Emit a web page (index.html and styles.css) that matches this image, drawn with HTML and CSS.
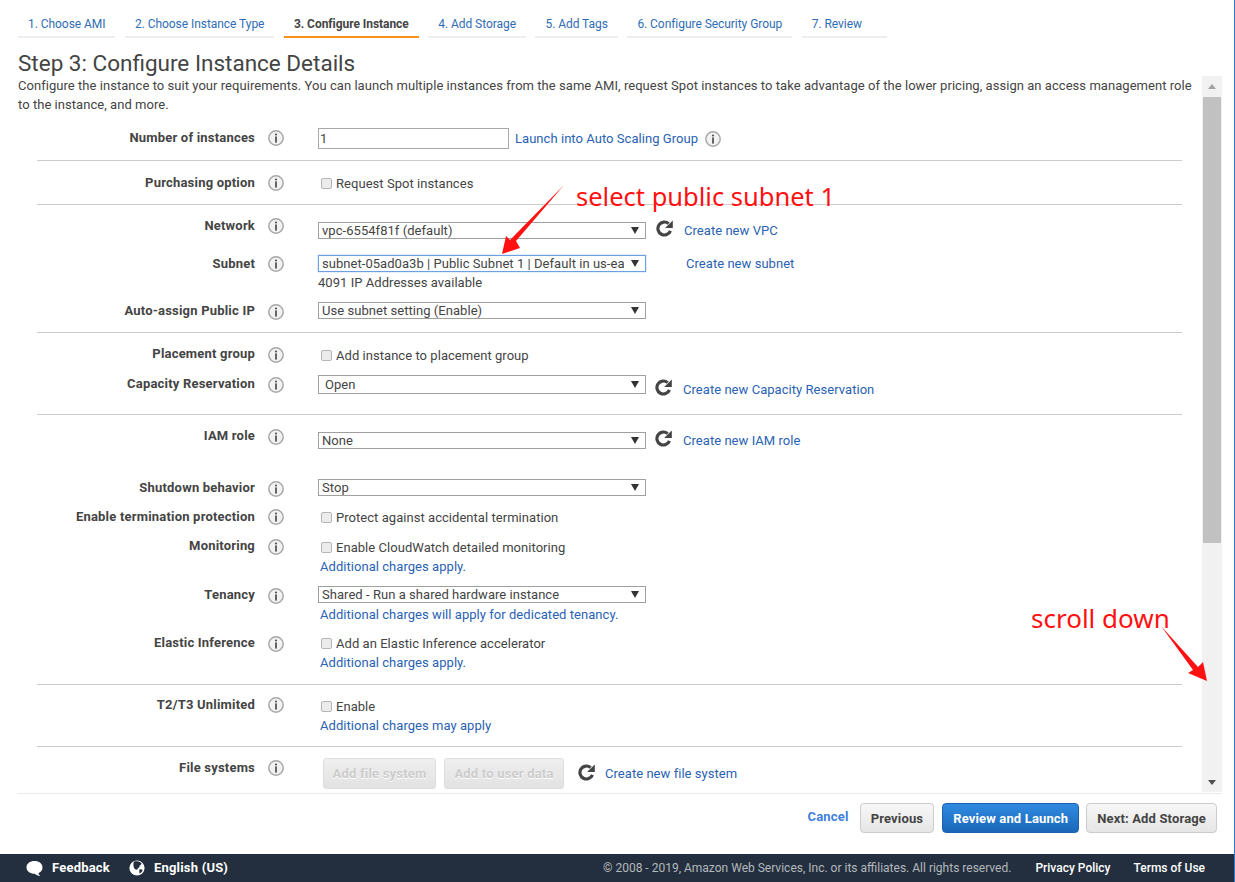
FILE: index.html
```html
<!DOCTYPE html>
<html lang="en">

<head>
  <meta charset="UTF-8">
  <title>Step 3: Configure Instance Details</title>
  <link rel="stylesheet" href="styles.css">
</head>

<body>
  <svg class="defs" width="0" height="0">
    <symbol id="info" viewBox="0 0 16 16">
      <circle cx="8" cy="8" r="7.2" fill="#f2f2f2" stroke="#a8a8a8" stroke-width="1.5" />
      <circle cx="8" cy="4.5" r="1.1" fill="#555" />
      <rect x="7.1" y="6.4" width="1.8" height="6.2" fill="#555" />
    </symbol>
    <symbol id="refresh" viewBox="0 0 16 16">
      <path d="M13.6 10.2A6.1 6.1 0 1 1 11.9 3.4" fill="none" stroke="#444" stroke-width="3" />
      <path d="M15.8 0.4V7.6H8.6Z" fill="#444" />
    </symbol>
  </svg>

  <nav class="steps">
    <a class="step">1. Choose AMI</a>
    <a class="step">2. Choose Instance Type</a>
    <a class="step active">3. Configure Instance</a>
    <a class="step">4. Add Storage</a>
    <a class="step">5. Add Tags</a>
    <a class="step">6. Configure Security Group</a>
    <a class="step">7. Review</a>
  </nav>

  <h1>Step 3: Configure Instance Details</h1>

  <div class="pane">
    <main class="content">
      <p class="desc">Configure the instance to suit your requirements. You can launch multiple instances from the same AMI, request Spot instances to take advantage of the lower pricing, assign an access management role to the instance, and more.</p>

      <section class="section sec-count">
        <div class="row">
          <label class="label nudge">Number of instances</label>
          <svg class="info"><use href="#info" /></svg>
          <div class="control">
            <div class="line">
              <input class="text-input" type="text" value="1">
              <a class="link launch">Launch into Auto Scaling Group</a>
              <svg class="info inline"><use href="#info" /></svg>
            </div>
          </div>
        </div>
      </section>

      <section class="section sec-purchase">
        <div class="row">
          <label class="label nudge">Purchasing option</label>
          <svg class="info"><use href="#info" /></svg>
          <div class="control check">
            <div class="line"><input type="checkbox"><span>Request Spot instances</span></div>
          </div>
        </div>
      </section>

      <section class="section sec-network">
        <div class="row">
          <label class="label nudge">Network</label>
          <svg class="info"><use href="#info" /></svg>
          <div class="control low5">
            <div class="line">
              <div class="select"><select><option>vpc-6554f81f (default)</option></select></div>
              <svg class="refresh"><use href="#refresh" /></svg>
              <a class="link">Create new VPC</a>
            </div>
          </div>
        </div>
        <div class="row">
          <label class="label nudge">Subnet</label>
          <svg class="info"><use href="#info" /></svg>
          <div class="control low0">
            <div class="line">
              <div class="select focused"><select><option>subnet-05ad0a3b | Public Subnet 1 | Default in us-east-1a</option></select></div>
              <a class="link subnet-link">Create new subnet</a>
            </div>
            <div class="note plain">4091 IP Addresses available</div>
          </div>
        </div>
        <div class="row">
          <label class="label">Auto-assign Public IP</label>
          <svg class="info"><use href="#info" /></svg>
          <div class="control">
            <div class="line">
              <div class="select"><select><option>Use subnet setting (Enable)</option></select></div>
            </div>
          </div>
        </div>
      </section>

      <section class="section sec-placement">
        <div class="row">
          <label class="label">Placement group</label>
          <svg class="info"><use href="#info" /></svg>
          <div class="control check">
            <div class="line"><input type="checkbox"><span>Add instance to placement group</span></div>
          </div>
        </div>
        <div class="row">
          <label class="label">Capacity Reservation</label>
          <svg class="info"><use href="#info" /></svg>
          <div class="control">
            <div class="line top">
              <div class="select tall"><select><option>Open</option></select></div>
              <svg class="refresh near low"><use href="#refresh" /></svg>
              <a class="link lower">Create new Capacity Reservation</a>
            </div>
          </div>
        </div>
      </section>

      <section class="section sec-behavior">
        <div class="row">
          <label class="label">IAM role</label>
          <svg class="info"><use href="#info" /></svg>
          <div class="control low4">
            <div class="line">
              <div class="select"><select><option>None</option></select></div>
              <svg class="refresh near"><use href="#refresh" /></svg>
              <a class="link">Create new IAM role</a>
            </div>
          </div>
        </div>
        <div class="row">
          <label class="label">Shutdown behavior</label>
          <svg class="info"><use href="#info" /></svg>
          <div class="control">
            <div class="line">
              <div class="select"><select><option>Stop</option></select></div>
            </div>
          </div>
        </div>
        <div class="row">
          <label class="label nudge">Enable termination protection</label>
          <svg class="info"><use href="#info" /></svg>
          <div class="control check">
            <div class="line"><input type="checkbox"><span>Protect against accidental termination</span></div>
          </div>
        </div>
        <div class="row">
          <label class="label">Monitoring</label>
          <svg class="info"><use href="#info" /></svg>
          <div class="control check">
            <div class="line"><input type="checkbox"><span>Enable CloudWatch detailed monitoring</span></div>
            <a class="link note">Additional charges apply.</a>
          </div>
        </div>
        <div class="row">
          <label class="label">Tenancy</label>
          <svg class="info"><use href="#info" /></svg>
          <div class="control">
            <div class="line">
              <div class="select"><select><option>Shared - Run a shared hardware instance</option></select></div>
            </div>
            <a class="link note wide">Additional charges will apply for dedicated tenancy.</a>
          </div>
        </div>
        <div class="row">
          <label class="label">Elastic Inference</label>
          <svg class="info"><use href="#info" /></svg>
          <div class="control check flat">
            <div class="line"><input type="checkbox"><span>Add an Elastic Inference accelerator</span></div>
            <a class="link note">Additional charges apply.</a>
          </div>
        </div>
      </section>

      <section class="section sec-unlimited">
        <div class="row">
          <label class="label nudge">T2/T3 Unlimited</label>
          <svg class="info"><use href="#info" /></svg>
          <div class="control check deep">
            <div class="line"><input type="checkbox"><span>Enable</span></div>
            <a class="link note">Additional charges may apply</a>
          </div>
        </div>
      </section>

      <section class="section sec-files">
        <div class="row">
          <label class="label nudge">File systems</label>
          <svg class="info"><use href="#info" /></svg>
          <div class="control">
            <div class="line">
              <button class="btn-disabled first" disabled>Add file system</button>
              <button class="btn-disabled" disabled>Add to user data</button>
              <svg class="refresh files"><use href="#refresh" /></svg>
              <a class="link">Create new file system</a>
            </div>
          </div>
        </div>
      </section>
    </main>

    <div class="scrollbar">
      <div class="scroll-btn"><span class="tri-up"></span></div>
      <div class="thumb"></div>
      <div class="scroll-btn bottom"><span class="tri-down"></span></div>
    </div>
  </div>

  <div class="actions">
    <a class="cancel">Cancel</a>
    <button class="btn">Previous</button>
    <button class="btn primary">Review and Launch</button>
    <button class="btn">Next: Add Storage</button>
  </div>

  <footer class="footer">
    <svg class="foot-icon" viewBox="0 0 17 17">
      <path d="M8.5 1C13 1 16.5 3.7 16.5 7.4C16.5 10.2 14.8 12.2 12.4 13C12.6 14.2 13.4 15.2 14.2 16C11.9 15.8 10 14.9 8.7 13.7C4 13.7 0.5 11.1 0.5 7.4C0.5 3.7 4 1 8.5 1Z" fill="#fff" />
    </svg>
    <a class="foot-link feedback">Feedback</a>
    <svg class="foot-icon globe" viewBox="0 0 16 16">
      <circle cx="8" cy="8" r="7.6" fill="#fff" />
      <path d="M5 1.6C7.5 1 10.5 1.3 12.4 3C12.6 4.6 11.6 5.2 10.6 5.7C10.8 7 10 7.6 9 8.2C8.8 9.4 7.8 9.8 6.8 9.6C5.4 8.8 4.4 7.6 4.6 6C4.2 4.4 4.4 3 5 1.6ZM10.4 9.6C11.6 9 12.8 9.2 13.6 10C13.2 11.6 12 13 10.6 13.8C10.6 12.2 10 11 10.4 9.6Z" fill="#232f3e" />
    </svg>
    <a class="foot-link">English (US)</a>
    <span class="copyright">© 2008 - 2019, Amazon Web Services, Inc. or its affiliates. All rights reserved.</span>
    <a class="foot-link privacy">Privacy Policy</a>
    <a class="foot-link terms">Terms of Use</a>
  </footer>

  <!-- red notes drawn over the screenshot -->
  <svg class="marks" viewBox="0 0 1235 882">
    <path d="M564 185L516 241L520 248L502 254L506 236L510 240Z" fill="#f11" />
    <path d="M1161 626L1198 667L1203 662L1207 681L1188 673L1193 670Z" fill="#f11" />
  </svg>
  <div class="mark-text mark-subnet">select public subnet 1</div>
  <div class="mark-text mark-scroll">scroll down</div>
</body>

</html>
```

FILE: styles.css
```css
html {
  background: white;
}

body {
  position: relative;
  display: flex;
  flex-direction: column;
  box-sizing: border-box;
  width: 1235px;
  height: 882px;
  margin: 0;
  overflow: hidden;
  border-right: 1px solid #2f7fc8;
  font-family: Roboto, sans-serif;
  font-size: 13px;
  line-height: 16px;
  letter-spacing: 0.045px;
  color: #444;
}

.defs {
  position: absolute;
}

/* wizard tabs */
.steps {
  display: flex;
  gap: 9.5px;
  height: 38px;
  box-sizing: border-box;
  padding-left: 18px;
}

.step {
  padding: 16px 10px 0;
  border-bottom: 2px solid #eee;
  font-size: 12px;
  letter-spacing: -0.05px;
  color: #2f6db5;
}

.step:last-child {
  padding-right: 25px;
}

.step.active {
  border-bottom-color: #f7931e;
  font-weight: 700;
  color: #444;
}

h1 {
  margin: 12px 0 0 18px;
  font-size: 22.5px;
  line-height: 26px;
  font-weight: 400;
  letter-spacing: 0;
  color: #444;
}

/* scrolling part */
.pane {
  display: flex;
  height: 717px;
  margin-left: 17px;
  margin-right: 12px;
}

.content {
  flex: 1;
  padding-left: 1px;
  overflow: hidden;
}

.desc {
  margin: 0;
  line-height: 19px;
}

.section {
  display: grid;
  box-sizing: border-box;
  margin: 0 20px 0 19px;
  border-bottom: 1px solid #ccc;
}

.sec-count {
  height: 47px;
  padding-top: 15px;
}

.sec-purchase {
  height: 44px;
  padding-top: 13px;
}

.sec-network {
  height: 128px;
  padding-top: 12px;
  grid-template-rows: 38px 48px 1fr;
}

.sec-placement {
  height: 82px;
  padding-top: 13px;
  grid-template-rows: 30px 1fr;
}

.sec-behavior {
  height: 270px;
  padding-top: 13px;
  grid-template-rows: 52px 28px 30px 49px 48px 1fr;
}

.sec-unlimited {
  height: 62px;
  padding-top: 11px;
}

.sec-files {
  padding-top: 12px;
  border-bottom: 0;
}

.row {
  display: flex;
  align-items: flex-start;
}

.label {
  flex: none;
  width: 218px;
  font-weight: 700;
  letter-spacing: 0.2px;
  text-align: right;
}

.label.nudge {
  margin-top: 1px;
}

.info {
  flex: none;
  width: 16px;
  height: 16px;
  margin: 1px 0 0 13px;
}

.info.inline {
  margin: 0 0 0 7px;
}

.control {
  display: flex;
  flex-direction: column;
  margin: -1px 0 0 34px;
}

.control.check {
  margin-top: 2px;
}

.control.check.flat {
  margin-top: 1px;
}

.control.check.deep {
  margin-top: 3px;
}

.control.low0 {
  margin-top: 0;
}

.control.low4 {
  margin-top: 4px;
}

.control.low5 {
  margin-top: 5px;
}

.low5 .link {
  margin-top: 1px;
}

.line {
  display: flex;
  align-items: center;
}

.line.top {
  align-items: flex-start;
}

.text-input {
  box-sizing: border-box;
  width: 191px;
  height: 21px;
  padding: 0 1px;
  border: 1px solid #a9a9a9;
  font: inherit;
  color: #444;
}

.select {
  position: relative;
  box-sizing: border-box;
  width: 328px;
  height: 17px;
  border: 1px solid #a0a0a0;
  background: white;
}

.select.tall {
  height: 19px;
}

.select.focused {
  border-color: #6c9fe4;
  box-shadow: 0 0 1px #6c9fe4;
}

.select::after {
  content: "";
  position: absolute;
  top: 50%;
  right: 6px;
  margin-top: -4px;
  border-top: 7px solid #333;
  border-left: 4px solid transparent;
  border-right: 4px solid transparent;
}

.select select {
  display: block;
  width: 100%;
  height: 100%;
  padding: 0 20px 0 3px;
  border: 0;
  outline: 0;
  background: none;
  appearance: none;
  font: inherit;
  letter-spacing: inherit;
  color: #444;
}

.select.tall select {
  padding-left: 6px;
}

.select.focused select {
  padding-left: 3px;
  padding-right: 21px;
}

.line input[type="checkbox"] {
  flex: none;
  width: 11px;
  height: 11px;
  margin: -2px 4px 0 3px;
  border: 1px solid #b5b5b5;
  border-radius: 2px;
  background: #ececec;
  appearance: none;
}

.link {
  color: #2a62b4;
}

.launch {
  margin-left: 6px;
}

.note {
  margin: 3px 0 0 2px;
}

.note.wide {
  margin-top: 4px;
}

.note.plain {
  margin-left: 0;
}

.refresh {
  flex: none;
  width: 17px;
  height: 17px;
  margin: -4px 11px 0 10px;
}

.refresh.near {
  margin: -4px 11px 0 9px;
}

.refresh.low {
  margin-top: 4px;
}

.refresh.files {
  margin: -2px 10px 0 14px;
}

.lower {
  margin-top: 7px;
}

.subnet-link {
  margin-left: 40px;
}

.btn-disabled {
  box-sizing: border-box;
  width: 113px;
  height: 31px;
  margin-left: 5px;
  padding: 0;
  border: 1px solid #dedede;
  border-radius: 3px;
  background: linear-gradient(#efefef, #e2e2e2);
  font: 700 13px Roboto, sans-serif;
  letter-spacing: 0.2px;
  color: #ccc;
  text-shadow: 0 1px 0 white;
}

.btn-disabled + .btn-disabled {
  width: 120px;
  margin-left: 8px;
}

/* scrollbar on the right */
.scrollbar {
  display: flex;
  flex-direction: column;
  flex: none;
  width: 20px;
  height: 716px;
  background: #f1f1f1;
}

.scroll-btn {
  display: flex;
  justify-content: center;
  align-items: center;
  height: 21px;
}

.scroll-btn.bottom {
  margin-top: auto;
  box-sizing: border-box;
  padding-top: 2px;
}

.tri-up {
  border-bottom: 5px solid #a3a3a3;
  border-left: 4px solid transparent;
  border-right: 4px solid transparent;
}

.tri-down {
  border-top: 5px solid #505050;
  border-left: 4px solid transparent;
  border-right: 4px solid transparent;
}

.thumb {
  width: 18px;
  height: 446px;
  margin-left: 1px;
  background: #c1c1c1;
}

/* buttons row */
.actions {
  display: flex;
  justify-content: flex-end;
  align-items: flex-start;
  box-sizing: border-box;
  height: 61px;
  margin-left: 17px;
  padding: 9px 5px 0 0;
  margin-right: 12px;
  border-top: 1px solid #eaeaea;
}

.cancel {
  margin: 6px 3px 0 0;
  font-weight: 700;
  letter-spacing: 0.2px;
  color: #3f7fdc;
}

.btn {
  box-sizing: border-box;
  height: 30px;
  margin-left: 8px;
  padding: 0 10px;
  border: 1px solid #ccc;
  border-radius: 4px;
  background: linear-gradient(#f7f7f7, #e6e6e6);
  font: 700 13px Roboto, sans-serif;
  letter-spacing: 0.15px;
  color: #444;
}

.btn.primary {
  border-color: #1a63b0;
  background: linear-gradient(#308be0, #1a66b8);
  color: white;
}

.btn:last-child {
  margin-left: 7px;
}

/* dark footer */
.footer {
  display: flex;
  align-items: center;
  height: 28px;
  flex: none;
  padding-left: 26px;
  background: #232f3e;
  color: white;
}

.foot-icon {
  flex: none;
  width: 17px;
  height: 17px;
}

.globe {
  width: 16px;
  height: 16px;
  margin-left: 19px;
}

.foot-link {
  margin-left: 9px;
  font-weight: 700;
  letter-spacing: 0.2px;
  color: white;
}

.copyright {
  margin-left: auto;
  font-size: 12px;
  letter-spacing: 0;
  color: #b4b8bd;
}

.privacy {
  margin-left: 24px;
  font-size: 12px;
  font-weight: 500;
  letter-spacing: 0;
}

.terms {
  margin: 0 29px 0 23px;
  font-size: 12px;
  font-weight: 500;
  letter-spacing: 0;
}

/* red annotations */
.marks {
  position: absolute;
  top: 0;
  left: 0;
  width: 1235px;
  height: 882px;
  pointer-events: none;
}

.mark-text {
  position: absolute;
  font-family: "Noto Sans", sans-serif;
  line-height: 32px;
  letter-spacing: 0;
  color: #f11;
  white-space: nowrap;
}

.mark-subnet {
  top: 180px;
  left: 576px;
  font-size: 25.5px;
}

.mark-scroll {
  top: 602px;
  left: 1031px;
  font-size: 26px;
}
```
